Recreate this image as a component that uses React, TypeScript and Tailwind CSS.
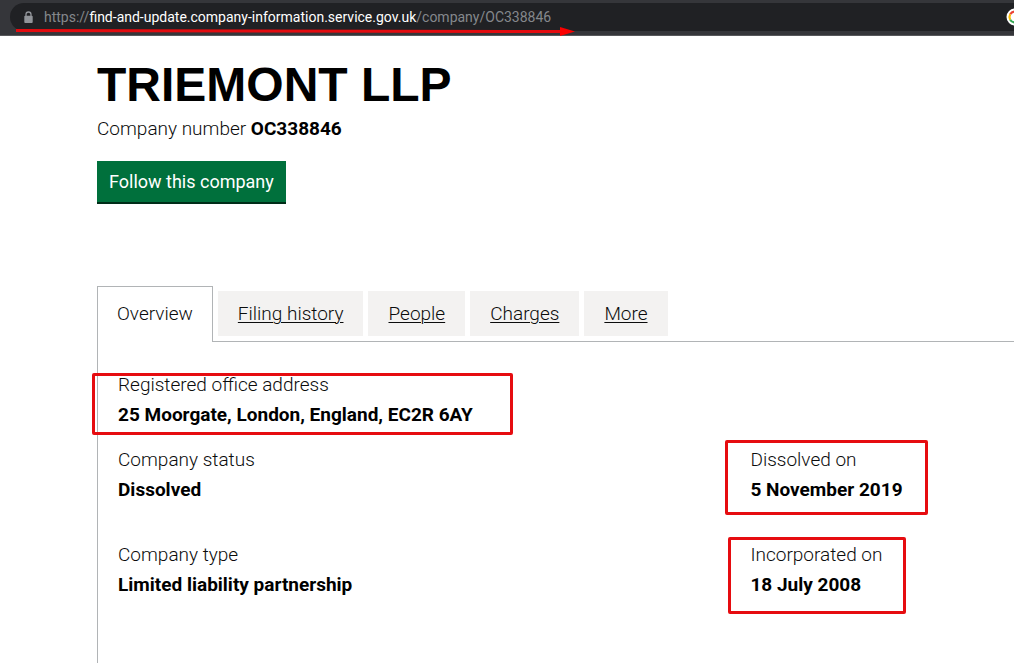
import clsx from "clsx";

const TABS = ["Overview", "Filing history", "People", "Charges", "More"];

function LockIcon() {
  return (
    <svg className="h-[13px] w-[9px] shrink-0" viewBox="0 0 9 13" aria-hidden="true">
      <path d="M2 6V3.5a2.5 2.5 0 0 1 5 0V6" fill="none" stroke="#919499" strokeWidth="1.3" />
      <rect x="0.3" y="4.8" width="8.4" height="7.2" rx="0.9" fill="#919499" />
    </svg>
  );
}

function GoogleIcon() {
  return (
    <svg className="-mr-[10px] h-[18px] w-[18px] shrink-0" viewBox="0 0 18 18" aria-hidden="true">
      <circle cx="9" cy="9" r="8.5" fill="#fff" />
      <g fill="none" strokeWidth="2.2">
        <path d="M4.2 6.3A5.5 5.5 0 0 1 13 5.2" stroke="#ea4335" />
        <path d="M4.2 11.7a5.5 5.5 0 0 1 0-5.4" stroke="#fbbc05" />
        <path d="M12.8 13a5.5 5.5 0 0 1-8.6-1.3" stroke="#34a853" />
        <path d="M9 9h5.5a5.5 5.5 0 0 1-1.7 4" stroke="#4285f4" />
      </g>
    </svg>
  );
}

function AddressBar() {
  return (
    <header className="relative flex h-9 items-start border-b border-[#57585b] bg-[#35363a] pt-[3px] pl-[10px]">
      <div className="flex h-7 flex-1 items-center overflow-hidden rounded-l-full bg-[#202124] pl-[14px]">
        <LockIcon />
        <p className="ml-[11px] flex-1 whitespace-nowrap text-sm font-normal text-[#85888c]">
          https://<span className="text-white">find-and-update.company-information.service.gov.uk</span>/company/OC338846
        </p>
        <GoogleIcon />
      </div>
      <svg className="absolute top-[26px] left-4 h-[11px] w-[559px]" viewBox="0 0 559 11" aria-hidden="true">
        <path d="M0 4.5 545 5.5" stroke="#e30b0f" strokeWidth="3" />
        <path d="M544 1l15 4.5-15 4.5z" fill="#fb0000" />
      </svg>
    </header>
  );
}

function Detail({ label, value, highlight }: { label: string; value: string; highlight?: string }) {
  return (
    <div className="relative">
      <dt className="mb-[5px]">{label}</dt>
      <dd className="font-bold text-black">{value}</dd>
      {highlight && <span className={clsx("pointer-events-none absolute rounded-xs border-3 border-[#e60c10]", highlight)} />}
    </div>
  );
}

export default function App() {
  return (
    <div className="flex min-h-screen flex-col overflow-x-hidden bg-white font-[Roboto,'Liberation_Sans',sans-serif] text-[19px] leading-[25px] font-light text-[#0b0c0c]">
      <AddressBar />
      <main className="flex flex-1 flex-col pt-6 pl-[97px]">
        <h1 className="font-['Liberation_Sans',Arial,sans-serif] text-5xl leading-[50px] font-bold text-black">TRIEMONT LLP</h1>
        <p className="mt-[6px]">
          Company number <strong className="font-bold text-black">OC338846</strong>
        </p>
        <button type="button" className="mt-5 h-[43px] self-start border-b-2 border-[#002d18] bg-[#00703c] px-3 text-lg font-normal text-white">
          Follow this company
        </button>

        <nav className="relative z-10 mt-[82px] -mb-px flex items-start gap-[5px]">
          {TABS.map((tab, i) => (
            <a
              key={tab}
              href="#"
              aria-current={i === 0 ? "page" : undefined}
              className={
                i === 0
                  ? "h-14 border border-b-0 border-[#b1b4b6] bg-white px-[19px] pt-[14px]"
                  : "mt-[5px] h-[45px] bg-[#f3f2f1] px-5 pt-[10px] underline decoration-1 underline-offset-2"
              }
            >
              {tab}
            </a>
          ))}
        </nav>

        <section className="flex-1 border-t border-l border-[#b1b4b6] pt-[30px] pl-5">
          <dl>
            <Detail label="Registered office address" value="25 Moorgate, London, England, EC2R 6AY" highlight="-left-[26px] top-px h-[62px] w-[421px]" />
            <div className="mt-5 grid grid-cols-[12fr_5fr] gap-y-10">
              <Detail label="Company status" value="Dissolved" />
              <Detail label="Dissolved on" value="5 November 2019" highlight="-left-[25px] -top-[7px] h-[75px] w-[203px]" />
              <Detail label="Company type" value="Limited liability partnership" />
              <Detail label="Incorporated on" value="18 July 2008" highlight="-left-[22px] -top-[5px] h-[77px] w-[178px]" />
            </div>
          </dl>
        </section>
      </main>
    </div>
  );
}
